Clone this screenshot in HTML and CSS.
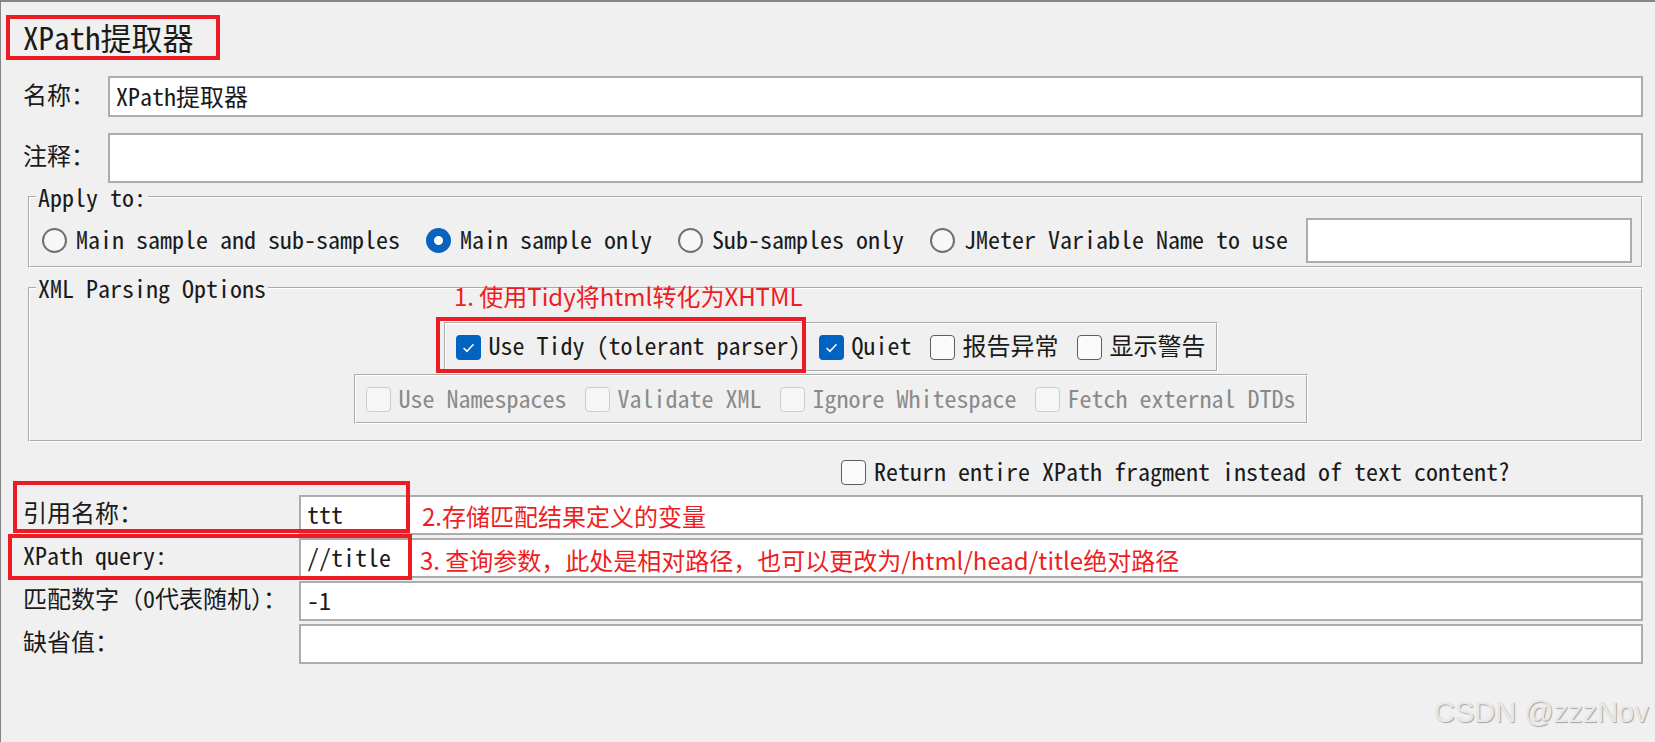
FILE: index.html
```html
<!DOCTYPE html>
<html>
    <head>
        <title>XPath提取器</title>
        <meta charset="utf8"/>
        <link rel="stylesheet" href="styles.css">
    </head>
    <body>
        <div class="panel">
            <h1 class="title">XPath提取器</h1>
            <div class="row">
                <label class="lbl">名称：</label>
                <div class="field">XPath提取器</div>
            </div>
            <div class="row">
                <label class="lbl">注释：</label>
                <div class="field tall"></div>
            </div>

            <fieldset class="group apply">
                <legend>Apply to:</legend>
                <div class="opts">
                    <span class="opt"><i class="radio"></i>Main sample and sub-samples</span>
                    <span class="opt"><i class="radio on"></i>Main sample only</span>
                    <span class="opt"><i class="radio"></i>Sub-samples only</span>
                    <span class="opt last"><i class="radio"></i>JMeter Variable Name to use</span>
                    <div class="field var"></div>
                </div>
            </fieldset>

            <fieldset class="group xml">
                <legend>XML Parsing Options</legend>
                <div class="xml-body">
                    <div class="cbox-panel">
                        <span class="opt"><i class="check on"><svg viewBox="0 0 25 25"><path d="M7.6 12.9l3.3 3.4 6.6-7"/></svg></i>Use Tidy (tolerant parser)</span>
                        <span class="opt"><i class="check on"><svg viewBox="0 0 25 25"><path d="M7.6 12.9l3.3 3.4 6.6-7"/></svg></i>Quiet</span>
                        <span class="opt"><i class="check"></i>报告异常</span>
                        <span class="opt"><i class="check"></i>显示警告</span>
                    </div>
                    <div class="cbox-panel disabled">
                        <span class="opt"><i class="check"></i>Use Namespaces</span>
                        <span class="opt"><i class="check"></i>Validate XML</span>
                        <span class="opt"><i class="check"></i>Ignore Whitespace</span>
                        <span class="opt"><i class="check"></i>Fetch external DTDs</span>
                    </div>
                </div>
            </fieldset>

            <div class="return-row">
                <span class="opt"><i class="check"></i>Return entire XPath fragment instead of text content?</span>
            </div>

            <div class="vars">
                <div class="var-row">
                    <label class="lbl">引用名称：</label>
                    <div class="field">ttt</div>
                </div>
                <div class="var-row">
                    <label class="lbl">XPath query:</label>
                    <div class="field">//title</div>
                </div>
                <div class="var-row">
                    <label class="lbl">匹配数字（0代表随机）：</label>
                    <div class="field">-1</div>
                </div>
                <div class="var-row">
                    <label class="lbl">缺省值：</label>
                    <div class="field"></div>
                </div>
            </div>

            <!-- 标注 -->
            <div class="mark tidy-mark"></div>
            <div class="mark ref-mark"></div>
            <div class="mark query-mark"></div>
            <p class="note note1">1. 使用Tidy将html转化为XHTML</p>
            <p class="note note2">2.存储匹配结果定义的变量</p>
            <p class="note note3">3. 查询参数，此处是相对路径，也可以更改为/html/head/title绝对路径</p>
            <p class="watermark">CSDN @zzzNov</p>
        </div>
    </body>
</html>
```

FILE: styles.css
```css
*{
    box-sizing: border-box;
}
body,h1,p,fieldset,legend{
    margin: 0px;
    padding: 0px;
}
body{
    background-color: #f0f0f0;
    font-family: "Noto Sans Mono CJK SC", "Liberation Mono", "Noto Sans CJK SC", monospace;
    font-size: 24px;
    color: #1a1a1a;
    overflow: hidden;
}
i{
    font-style: normal;
}
.panel{
    position: relative;
    height: 742px;
    padding-top: 15px;
    box-shadow: inset 1px 2px 0 #858585;
}
.title{
    width: 214px;
    height: 45px;
    margin-left: 6px;
    padding-left: 13px;
    border: 4px solid #ed1c24;
    font-size: 31px;
    font-weight: normal;
    line-height: 36px;
    white-space: nowrap;
}
.row{
    display: flex;
    align-items: center;
    margin-top: 16px;
    padding: 0 12px 0 23px;
}
.row .lbl{
    width: 85px;
    flex-shrink: 0;
    padding-bottom: 6px;
    line-height: 28px;
}
.field{
    flex: 1;
    height: 41px;
    padding: 0 6px;
    border: 2px solid #acacac;
    background-color: #fff;
    line-height: 35px;
    white-space: nowrap;
}
.field.tall{
    height: 50px;
}

/* 分组框 */
.group{
    margin: 2px 12px 0 28px;
    padding: 9px 9px 3px 0;
    border: 2px groove #fff;
}
.group legend{
    margin-left: 6px;
    padding: 0 2px;
    line-height: 24px;
}
.opts{
    display: flex;
    align-items: center;
    padding-left: 12px;
}
.opt{
    display: flex;
    align-items: center;
    gap: 9px;
    padding-bottom: 4px;
    white-space: nowrap;
    line-height: 26px;
}
.opt .radio,
.opt .check{
    margin-top: 4px;
}
.opts .opt{
    margin-right: 26px;
}
.opts .opt.last{
    margin-right: 18px;
}
.field.var{
    height: 45px;
}
.radio{
    width: 25px;
    height: 25px;
    flex-shrink: 0;
    border: 2px solid #707070;
    border-radius: 50%;
    background-color: #f7f7f7;
}
.radio.on{
    border: 0;
    background: radial-gradient(circle, #fff 4px, #0862c0 5px);
}
.check{
    display: block;
    width: 25px;
    height: 25px;
    flex-shrink: 0;
    border: 1.5px solid #5d5d5d;
    border-radius: 4px;
    background-color: #fafafa;
}
.check.on{
    border: 0;
    background-color: #0062c1;
}
.check svg{
    display: block;
    width: 25px;
    height: 25px;
    fill: none;
    stroke: #fff;
    stroke-width: 1.5;
}

.xml{
    margin-top: 8px;
    padding: 22px 0 16px 0;
}
.xml-body{
    display: flex;
    flex-direction: column;
    align-items: center;
    gap: 2px;
    padding-right: 10px;
}
.cbox-panel{
    display: flex;
    align-items: center;
    gap: 18px;
    height: 50px;
    padding: 0 10px;
    border: 2px groove #fff;
}
.cbox-panel .opt{
    gap: 8px;
}
.cbox-panel.disabled{
    color: #8a8a8a;
}
.cbox-panel.disabled .opt{
    padding-bottom: 2px;
}
.cbox-panel.disabled .check{
    margin-top: 2px;
    border-color: #cdcdcd;
    background-color: #f6f6f6;
}

.return-row{
    display: flex;
    margin: 14px 0 0 841px;
}
.return-row .opt{
    gap: 8px;
}

.vars{
    display: flex;
    flex-direction: column;
    gap: 3px;
    margin-top: 6px;
    padding: 0 12px 0 23px;
}
.var-row{
    display: flex;
    align-items: center;
}
.var-row .lbl{
    width: 276px;
    flex-shrink: 0;
    padding-bottom: 6px;
    line-height: 28px;
    white-space: nowrap;
}
.var-row .field{
    height: 40px;
    line-height: 34px;
}

/* 红色标注 */
.mark{
    position: absolute;
    border: 4px solid #ed1c24;
}
.tidy-mark{
    left: 436px;
    top: 317px;
    width: 370px;
    height: 56px;
}
.ref-mark{
    left: 13px;
    top: 481px;
    width: 397px;
    height: 52px;
}
.query-mark{
    left: 8px;
    top: 534px;
    width: 404px;
    height: 46px;
}
.note{
    position: absolute;
    font-family: "Noto Sans CJK SC", sans-serif;
    font-size: 24px;
    line-height: 30px;
    color: #ee1d24;
    white-space: nowrap;
}
.note1{
    left: 454px;
    top: 281px;
}
.note2{
    left: 422px;
    top: 501px;
}
.note3{
    left: 420px;
    top: 545px;
}
.watermark{
    position: absolute;
    left: 1434px;
    top: 698px;
    font-family: "Liberation Sans", sans-serif;
    font-size: 29px;
    line-height: 29px;
    color: #e8e8e8;
    text-shadow: 1px 1px 1px #a5a5a5;
}
```
